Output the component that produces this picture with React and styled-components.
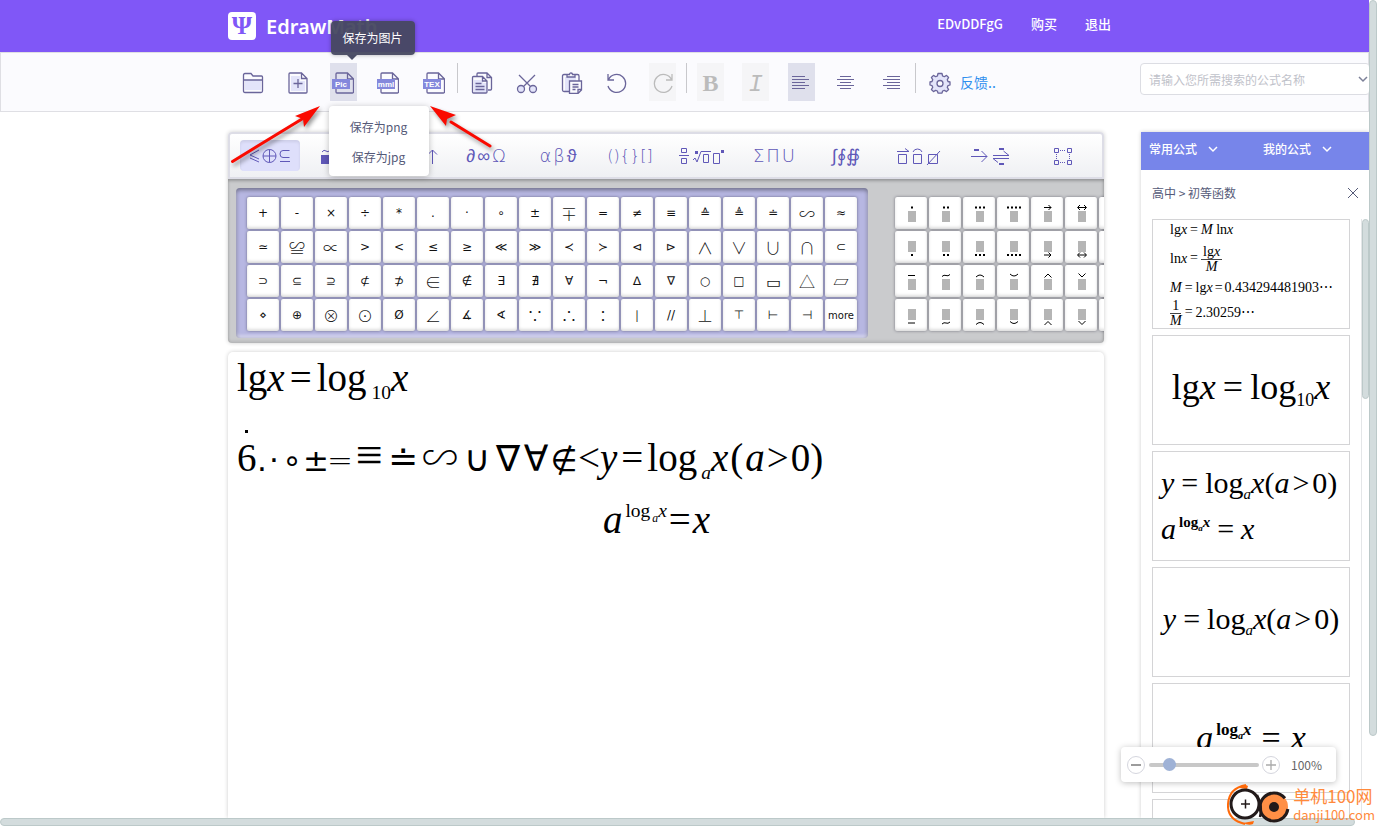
import React from 'react'
import styled, { createGlobalStyle, css } from 'styled-components'

const GlobalStyle = createGlobalStyle`
    *{
        box-sizing: border-box;
        margin: 0;
        padding: 0;
    }
    body{
        font-family: "Noto Sans CJK SC", "Noto Sans", sans-serif;
        font-size: 12px;
        color: #555a78;
        background-color: #fff;
        overflow: hidden;
    }
    button{
        border: none;
        background: none;
        font: inherit;
        color: inherit;
        cursor: pointer;
    }
    a{
        text-decoration: none;
        color: inherit;
    }
`

/* page frame */
const Frame = styled.div`
    position: relative;
    display: grid;
    grid-template-columns: minmax(0, 1fr) 8px;
    grid-template-rows: minmax(0, 1fr) 8px;
    height: 100vh;
`
const Page = styled.div`
    display: flex;
    flex-direction: column;
    min-height: 0;
`
const Track = styled.div`
    display: flex;
    flex-direction: ${p => (p.$vertical ? 'column' : 'row')};
    background-color: #fff;
    border: 0 solid #e4e6e8;
    border-left-width: ${p => (p.$line ? '1px' : 0)};
`
const Thumb = styled.div`
    flex: 0 0 ${p => p.$size};
    border: 1px solid #bcc9c9;
    border-radius: 4px;
    background-color: #d3dcdd;
`

/* header */
const Header = styled.header`
    flex: none;
    display: flex;
    align-items: center;
    justify-content: space-between;
    height: 52px;
    padding: 0 258px 0 228px;
    background-color: #8057f7;
    color: #fff;
`
const Brand = styled.a`
    display: flex;
    align-items: center;
    gap: 10px;
    font-family: "Noto Sans", sans-serif;
    font-size: 20px;
    font-weight: 600;
`
const BrandMark = styled.span`
    width: 28px;
    height: 28px;
    border-radius: 4px;
    background-color: #fff;
    color: #8057f7;
    font-family: "Liberation Serif", serif;
    font-size: 26px;
    font-weight: bold;
    line-height: 28px;
    text-align: center;
`
const UserNav = styled.nav`
    display: flex;
    gap: 28px;
    font-weight: 500;
    font-size: 13px;
    line-height: 20px;
    margin-bottom: 4px;
`

/* toolbar */
const Toolbar = styled.div`
    flex: none;
    display: flex;
    align-items: center;
    height: 60px;
    padding-left: 238px;
    border: 1px solid #dfdfe4;
    background-color: #fbfbfe;
`
const ToolGroup = styled.div`
    display: flex;
    justify-content: space-between;
    width: 208px;
`
const Divider = styled.span`
    width: 1px;
    height: 30px;
    margin: 0 10px 8px;
    background-color: #c8c8cc;
`
const ToolButton = styled.button`
    display: flex;
    align-items: center;
    justify-content: center;
    width: 27px;
    height: 38px;
    padding-top: 2px;
    color: #6a659a;
    ${p => p.$active && css`background-color: #dfe0ec;`}
    &:disabled{
        background-color: #f5f5f7;
        color: #bbb;
    }
`
const Letter = styled.span`
    font-family: ${p => (p.$italic ? '"Liberation Mono", monospace' : '"Liberation Serif", serif')};
    font-style: ${p => (p.$italic ? 'italic' : 'normal')};
    font-weight: ${p => (p.$italic ? 'normal' : 'bold')};
    font-size: 24px;
    line-height: 24px;
    padding-top: ${p => (p.$italic ? '4px' : 0)};
`
const ToolWrap = styled.div`
    position: relative;
`
const Tooltip = styled.div`
    position: absolute;
    z-index: 3;
    left: 1px;
    bottom: 46px;
    padding: 7px 12px;
    border-radius: 4px;
    background-color: rgba(70, 72, 96, 0.95);
    color: #fff;
    line-height: 20px;
    white-space: nowrap;
    box-shadow: 0 0 4px rgba(0, 0, 0, 0.3);
    &::after{
        content: "";
        position: absolute;
        left: 16px;
        top: 100%;
        border: 5px solid transparent;
        border-top-color: #4b4d66;
        border-bottom: none;
    }
`
const Menu = styled.div`
    position: absolute;
    z-index: 3;
    top: 43px;
    left: -1px;
    width: 100px;
    padding: 5px 0;
    border-radius: 4px;
    background-color: #fff;
    box-shadow: 0 1px 6px rgba(0, 0, 0, 0.25);
`
const MenuItem = styled.button`
    display: block;
    width: 100%;
    height: 30px;
    text-align: center;
`
const Feedback = styled.a`
    margin-left: 7px;
    color: #2f8fee;
    font-size: 14px;
`
const Search = styled.label`
    display: flex;
    align-items: center;
    width: 230px;
    height: 32px;
    margin: 0 -2px 6px auto;
    padding-left: 8px;
    border: 1px solid #dcdde3;
    border-radius: 4px;
    background-color: #fff;
    color: #7c8098;
    overflow: hidden;
    input{
        flex: 1;
        min-width: 0;
        border: none;
        outline: none;
        font: inherit;
        color: #555a78;
        background: none;
    }
    input::placeholder{
        color: #bfc2ca;
    }
`

/* body */
const Body = styled.main`
    flex: 1;
    min-height: 0;
    display: grid;
    grid-template-columns: minmax(0, 1fr) 228px;
    column-gap: 37px;
    padding: 20px 0 0 228px;
    overflow: hidden;
`
const Editor = styled.section`
    display: flex;
    flex-direction: column;
    gap: 9px;
    min-width: 0;
    min-height: 0;
`
const PaletteBox = styled.div`
    flex: none;
    border-radius: 4px;
    box-shadow: 0 0 4px rgba(0, 0, 0, 0.2);
`
const Tabs = styled.div`
    display: grid;
    grid-template-columns: repeat(12, 1fr);
    align-items: center;
    height: 47px;
    padding: 0 4px;
    border: 2px solid #dddde6;
    border-radius: 4px 4px 0 0;
    background: linear-gradient(#fff, #eff0f3);
`
const Tab = styled.button`
    justify-self: center;
    display: flex;
    align-items: center;
    justify-content: center;
    gap: 2px;
    width: 60px;
    height: 31px;
    border-radius: 4px;
    color: #6058b8;
    font-family: "DejaVu Sans", sans-serif;
    font-weight: 200;
    font-size: 18px;
    white-space: nowrap;
    ${p => p.$active && css`
        background-color: #dedffb;
        box-shadow: inset 0 2px 3px rgba(0, 0, 0, 0.08);
    `}
`
const Brackets = styled.span`
    font-size: 16px;
`
const Shelf = styled.div`
    display: flex;
    gap: 16px;
    height: 164px;
    padding: 9px 0 5px 8px;
    border-radius: 0 0 4px 4px;
    background-color: #cacbcd;
    box-shadow: inset 0 2px 3px rgba(0, 0, 0, 0.25), inset -1px -2px 3px rgba(0, 0, 0, 0.1);
    overflow: hidden;
`
const KeyPanel = styled.div`
    flex: none;
    display: grid;
    grid-template-columns: repeat(${p => p.$cols}, 32px);
    grid-auto-rows: 32px;
    gap: 2px;
    padding: 9px 11px 7px;
    border-radius: 4px;
    ${p => p.$active && css`
        background-color: #b7b7e2;
        box-shadow: inset 0 2px 4px rgba(0, 0, 0, 0.4), inset 0 -3px 3px rgba(255, 255, 255, 0.4);
    `}
`
const Key = styled.button`
    display: flex;
    align-items: center;
    justify-content: center;
    border-radius: 2px;
    background-color: #fff;
    box-shadow: 0 0 3px rgba(40, 40, 60, 0.55), inset 0 -2px 3px rgba(0, 0, 0, 0.13);
    color: #111;
    font-family: "DejaVu Sans", sans-serif;
    font-size: 12px;
    ${p => p.$big && css`
        font-family: "Noto Sans CJK JP", "DejaVu Sans", sans-serif;
        font-weight: 300;
        font-size: 16px;
    `}
    ${p => p.$word && css`font-size: 10px;`}
`

const Sheet = styled.div`
    flex: 1;
    min-height: 0;
    padding: 4px 28px 0 9px;
    border-radius: 5px 5px 0 0;
    background-color: #fff;
    box-shadow: 0 0 4px rgba(0, 0, 0, 0.2);
`
const Line = styled.div`
    display: flex;
    align-items: baseline;
    justify-content: ${p => (p.$center ? 'center' : 'flex-start')};
    height: ${p => (p.$tall ? '78px' : '64px')};
    line-height: ${p => (p.$tall ? '66px' : '44px')};
    padding-top: ${p => (p.$tall ? '2px' : 0)};
    color: #000;
    font-family: "Liberation Serif", serif;
    font-size: 39px;
    white-space: nowrap;
`
const symFonts = {
    sans: '"DejaVu Sans", sans-serif',
    serif: '"Liberation Serif", serif',
    cjk: '"Noto Sans CJK JP", sans-serif',
}
const Sym = styled.span`
    display: flex;
    justify-content: center;
    width: ${p => p.$w}px;
    font-family: ${p => symFonts[p.$font || 'sans']};
    font-size: ${p => p.$size || 31}px;
    font-weight: ${p => (p.$thin ? 200 : 400)};
`
const Dotted = styled.span`
    position: relative;
    width: 19px;
    &::before{
        content: "";
        position: absolute;
        left: 8px;
        top: 5px;
        width: 3px;
        height: 3px;
        background-color: #000;
    }
`

/* formula text */
const Formula = styled.span`
    font-family: "Liberation Serif", serif;
    font-size: ${p => p.$size}px;
    line-height: 1;
    color: #000;
    white-space: nowrap;
`
const Op = styled.span`
    margin: 0 ${p => p.$gap || 0}px;
`
const Sub = styled.sub`
    font-size: 50%;
    line-height: 0;
    vertical-align: -0.4em;
    margin-left: ${p => p.$gap || 0}px;
`
const Sup = styled.sup`
    font-size: 50%;
    line-height: 0;
    vertical-align: 0.8em;
    margin-left: 3px;
    font-weight: ${p => (p.$bold ? 'bold' : 'normal')};
    ${Sub}{
        font-size: 60%;
    }
`
const Frac = styled.span`
    display: inline-flex;
    flex-direction: column;
    align-items: center;
    vertical-align: middle;
    > :first-child{
        border-bottom: 1px solid #444;
        padding: 0 2px;
    }
`

/* side panel */
const Side = styled.aside`
    display: flex;
    flex-direction: column;
    min-height: 0;
    box-shadow: 0 0 4px rgba(0, 0, 0, 0.2);
`
const SideTabs = styled.div`
    flex: none;
    display: grid;
    grid-template-columns: 1fr 1fr;
    height: 38px;
    background-color: #7785ea;
    color: #fff;
    font-weight: 500;
`
const SideTab = styled.button`
    display: flex;
    align-items: center;
    gap: 10px;
    padding: 0 8px 5px;
`
const Crumb = styled.div`
    flex: none;
    display: flex;
    align-items: center;
    justify-content: space-between;
    height: 49px;
    padding: 0 9px 4px 11px;
    button{
        display: flex;
    }
`
const CardArea = styled.div`
    flex: 1;
    min-height: 0;
    display: grid;
    grid-template-columns: minmax(0, 1fr) 8px;
    column-gap: 11px;
    padding-left: 11px;
`
const CardList = styled.div`
    display: flex;
    flex-direction: column;
    gap: 6px;
    overflow: hidden;
`
const Card = styled.div`
    flex: none;
    display: flex;
    flex-direction: column;
    justify-content: center;
    align-items: ${p => (p.$left ? 'flex-start' : 'center')};
    gap: 16px;
    height: 110px;
    padding: 0 8px ${p => (p.$low ? 0 : '6px')};
    border: 1px solid #d4d4d6;
`
const CardRows = styled(Card)`
    display: grid;
    grid-template-rows: 20px 38px 20px 30px;
    gap: 0;
    align-items: center;
    justify-content: start;
    padding: 0 17px;
`

/* overlays */
const ZoomBar = styled.div`
    position: absolute;
    right: 41px;
    bottom: 44px;
    display: flex;
    align-items: center;
    width: 215px;
    height: 35px;
    padding: 0 6px;
    border-radius: 4px;
    background-color: #fff;
    box-shadow: 0 1px 6px rgba(0, 0, 0, 0.25);
    color: #666;
`
const RoundButton = styled.button`
    display: flex;
    align-items: center;
    justify-content: center;
    width: 18px;
    height: 18px;
    border: 1px solid #d5d6de;
    border-radius: 50%;
    color: ${p => (p.$light ? '#aaa' : '#666')};
`
const Range = styled.input`
    appearance: none;
    width: 110px;
    height: 4px;
    margin: 0 3px 0 4px;
    border-radius: 2px;
    background-color: #c8c8c8;
    &::-webkit-slider-thumb{
        appearance: none;
        width: 13px;
        height: 13px;
        border-radius: 50%;
        background-color: #9fb2d6;
    }
`
const ZoomValue = styled.output`
    margin-left: 11px;
    line-height: 18px;
`
const Annotation = styled.svg`
    position: absolute;
    z-index: 4;
    left: 224px;
    top: 98px;
    pointer-events: none;
`
const Stamp = styled.div`
    position: absolute;
    right: 2px;
    bottom: 0;
    display: flex;
    align-items: center;
    gap: 2px;
    color: #ff8a3c;
`
const StampText = styled.div`
    font-size: 17px;
    line-height: 20px;
    small{
        display: block;
        font-size: 13px;
        line-height: 18px;
    }
`

/* icons */
const Icon = ({ size = 22, children, ...rest }) => (
    <svg width={size} height={size} viewBox={`0 0 ${size} ${size}`} fill="none" stroke="currentColor" strokeWidth="1.3" {...rest}>
        {children}
    </svg>
)
const FolderIcon = () => (
    <Icon>
        <path d="M3 8h16v10H3z" fill="#e3e4fa" stroke="none" />
        <path d="M1.5 19V3q0-1.5 1.5-1.5h6l2 2.5h8.500q1 0 1 1V19q0 1.500-1.500 1.500H3q-1.500 0-1.500-1.500zM1.500 8h19" />
    </Icon>
)
const NewIcon = () => (
    <Icon>
        <path d="M4 4h9v5h5v10H4z" fill="#e3e4fa" stroke="none" />
        <path d="M14.500 1H3Q2 1 2 2v18q0 1 1 1h16q1 0 1-1V6.500zM14.500 1v5.500H20M11 7v9M6.500 11.500h9" />
    </Icon>
)
const FileIcon = ({ label }) => (
    <Icon>
        <path d="M15.500 1H5Q4 1 4 2v18q0 1 1 1h15.500q1 0 1-1V7zM15.500 1v6h6" />
        <rect x="0" y="7" width="18" height="10" fill="#8488dc" stroke="none" />
        <text x="9" y="15" textAnchor="middle" fontFamily="Liberation Sans" fontWeight="bold" fontSize="8" fill="#fff" stroke="none">{label}</text>
    </Icon>
)
const CopyIcon = () => (
    <Icon>
        <path d="M3 8h9v3h4v9H3z" fill="#e3e4fa" stroke="none" />
        <path d="M6 4V2q0-1 1-1h9l4.500 4.500V17q0 1-1 1H17M16 1v4.500h4.500" />
        <path d="M11.500 4.500H2.500q-1 0-1 1V20q0 1 1 1H15q1 0 1-1V9zM11.500 4.500V9H16M4.500 11.500h6M4.500 14.500h9M4.500 17.500h9" />
    </Icon>
)
const CutIcon = () => (
    <Icon>
        <circle cx="5" cy="17" r="3.500" fill="#e3e4fa" />
        <circle cx="17" cy="17" r="3.500" fill="#e3e4fa" />
        <path d="M3 3l11.500 11.500M19 3L7.500 14.500" />
    </Icon>
)
const PasteIcon = () => (
    <Icon>
        <path d="M4 5h11v4H9v10H4z" fill="#e3e4fa" stroke="none" />
        <path d="M6 2.500H3q-1.500 0-1.500 1.500v14q0 1.500 1.500 1.500h5M14 2.500h2.500Q18 2.500 18 4v5M6 5V2.500h2.500q0-1.500 1.500-1.500t1.500 1.500H14V5z" />
        <path d="M8.500 9h12v9l-3.500 3.500H8.500zM17 21v-3.500h3.500M11.500 12.500h6M11.500 15h6M11.500 17.500h3" />
    </Icon>
)
const UndoIcon = ({ flip }) => (
    <Icon>
        <path d={flip ? 'M19.500 7.500A9 9 0 1 0 20 14M20 2v6h-6' : 'M2.500 7.500A9 9 0 1 1 2 14M2 2v6h6'} />
    </Icon>
)
const AlignIcon = ({ rows }) => (
    <Icon shapeRendering="crispEdges" strokeWidth="1">
        {rows.map(([x, w], i) => <path key={i} d={`M${x} ${4.5 + i * 3}h${w}`} />)}
    </Icon>
)
const GearIcon = () => (
    <Icon>
        <path
            d="M9 1.500h4l.6 2.500 1.700.7 2.200-1.300 2.100 2.100-1.300 2.200.7 1.800 2 .500v3l-2 .600-.7 1.700 1.300 2.200-2.100 2.100-2.200-1.300-1.700.7-.6 2.200H9l-.6-2.200-1.700-.7-2.200 1.300-2.100-2.100 1.300-2.200L3 13.600l-2-.600v-3l2-.500.7-1.800-1.300-2.200 2.100-2.100 2.200 1.300L8.400 4z"
            fill="#e3e4fa"
            strokeLinejoin="round"
        />
        <circle cx="11" cy="11.500" r="3" fill="#fbfbfe" />
    </Icon>
)
const Chevron = () => (
    <Icon size={12} strokeWidth="1.500"><path d="M2 4l4 4 4-4" /></Icon>
)

const TabIcon = ({ children }) => (
    <svg width="54" height="20" viewBox="0 0 54 20" fill="none" stroke="currentColor">{children}</svg>
)
const letters = text => [...text].map(e => <span key={e}>{e}</span>)
const tabs = [
    <TabIcon>
        <path d="M16 4L7 9l9 4M7 12l9 4M46.500 4.500H40q-3 0-3 3.500t3 3.500h6.500M37 15.500h10" />
        <circle cx="26.500" cy="10" r="6.500" />
        <path d="M20 10h13M26.500 3.500v13" />
    </TabIcon>,
    <TabIcon>
        <path d="M6 9h9v9H6zM22 9h9v9h-9zM38 9h9v9h-9z" fill="currentColor" stroke="none" />
        <path d="M7 6q2-3 4-1t4-1M22 5h9M38 6l4-3 4 3" />
    </TabIcon>,
    <TabIcon>
        <path d="M4 10h14M4 10l4-4M4 10l4 4M24 10h10M45.500 4v14M41 8.500l4.500-4.500 4.500 4.500" />
    </TabIcon>,
    letters('∂∞Ω'),
    letters('αβϑ'),
    <Brackets>{'(){}[]'}</Brackets>,
    <TabIcon>
        <path d="M6.500 2.500h5v4h-5zM4 9.500h10M6.500 12.500h5v5h-5zM18 14l2-2 2 4 4-10.500h10M28.500 8.500h5v8h-5zM38.500 7.500h6v10h-6z" />
        <path d="M20 5h3v3h-3zM46 4h3v3h-3z" fill="currentColor" stroke="none" />
    </TabIcon>,
    letters('ΣΠU'),
    '∫∮∯',
    <TabIcon>
        <path d="M7.500 8.500h8v9h-8zM6 5.500h12M14 2.500l4 3M22.500 8.500h8v9h-8zM22 6q1-3 4.500-3T31 6M37.500 8.500h9v9h-9zM36 19L49 5" />
    </TabIcon>,
    <TabIcon>
        <path d="M8 10.500h16M18.500 5l5.500 5.500-5.500 5.500M30 9.500h16L40.500 5M46 12.500H30l5 4" />
        <path d="M11 3h5v2h-5zM36 2h5v2h-5zM36 17h5v2h-5z" fill="currentColor" stroke="none" />
    </TabIcon>,
    <TabIcon>
        <path d="M19.500 2.500h4v4h-4zM32.500 2.500h4v4h-4zM19.500 14.500h4v4h-4zM32.500 14.500h4v4h-4z" />
        <path d="M25 4.500h6M25 16.500h6M21.500 8v6M34.500 8v6" strokeDasharray="1 1" />
    </TabIcon>,
]

const keys = [
    '+', '-', '×', '÷', '*', '.', '·', '∘', '±', '∓', '=', '≠', '≡', '≙', '≜', '≐', '∽', '≈',
    '≃', '≌', '∝', '>', '<', '≤', '≥', '≪', '≫', '≺', '≻', '⊲', '⊳', '∧', '∨', '∪', '∩', '⊂',
    '⊃', '⊆', '⊇', '⊄', '⊅', '∈', '∉', '∃', '∄', '∀', '¬', '∆', '∇', '○', '□', '▭', '△', '▱',
    '⋄', '⊕', '⊗', '⊙', 'Ø', '∠', '∡', '∢', '∵', '∴', '∶', '∣', '//', '⊥', '⊤', '⊢', '⊣', 'more',
]
const bigKeys = '∓∽≌∝∧∨∪∩∈⊗⊙∠∵∴∶∣⊥▭△▱'

// mark shapes drawn over or under the placeholder box, centred on x=17
const marks = {
    dot1: 'M16 0h2',
    dot2: 'M14 0h2M18 0h2',
    dot3: 'M12 0h2M16 0h2M20 0h2',
    dot4: 'M10 0h2M14 0h2M18 0h2M22 0h2',
    right: 'M13 0h7M17.500-2.500l2.500 2.500-2.500 2.500',
    both: 'M13 0h8M15-2.500L12.500 0l2.500 2.500M19-2.500L21.500 0l-2.500 2.500',
    bar: 'M13 0h7',
    tilde: 'M13 1q2-2 4-1t4-1',
    cap: 'M13 1.500q4-4 8 0',
    cup: 'M13-1.500q4 4 8 0',
    hat: 'M13.500 2l3.500-3.500 3.500 3.500',
    check: 'M13.500-2L17 1.500 20.500-2',
}
const accentRows = [
    { under: false, names: ['dot1', 'dot2', 'dot3', 'dot4', 'right', 'both', 'bar'] },
    { under: true, names: ['dot1', 'dot2', 'dot3', 'dot4', 'right', 'both', 'bar'] },
    { under: false, names: ['bar', 'tilde', 'cap', 'cup', 'hat', 'check', 'bar'] },
    { under: true, names: ['bar', 'tilde', 'cap', 'cup', 'hat', 'check', 'bar'] },
]
const Accent = ({ name, under }) => (
    <svg width="32" height="32" viewBox="0 0 32 32" fill="none" stroke="#000">
        <rect x="13" y={under ? 10 : 14} width="8" height="11" fill="#b5b5b5" stroke="none" />
        <path d={marks[name]} transform={`translate(0 ${under ? 24 : 10.5})`} strokeWidth={name.startsWith('dot') ? 2 : 1} />
    </svg>
)

const LogFormula = ({ size, gap }) => (
    <Formula $size={size}>
        <i>y</i><Op $gap={gap}>=</Op>log<Sub><i>a</i></Sub><i>x</i>(<i>a</i><Op $gap={3}>&gt;</Op>0)
    </Formula>
)
const PowFormula = ({ size, gap }) => (
    <Formula $size={size}>
        <i>a</i><Sup $bold>log<Sub><i>a</i></Sub><i>x</i></Sup><Op $gap={gap}>=</Op><i>x</i>
    </Formula>
)

function App() {
    return (
        <>
            <GlobalStyle />
            <Frame>
                <Page>
                    <Header>
                        <Brand href="#"><BrandMark>Ψ</BrandMark>EdrawMath</Brand>
                        <UserNav>
                            <a href="#">EDvDDFgG</a>
                            <a href="#">购买</a>
                            <a href="#">退出</a>
                        </UserNav>
                    </Header>
                    <Toolbar>
                        <ToolGroup>
                            <ToolButton aria-label="打开"><FolderIcon /></ToolButton>
                            <ToolButton aria-label="新建"><NewIcon /></ToolButton>
                            <ToolWrap>
                                <ToolButton $active aria-label="保存为图片"><FileIcon label="Pic" /></ToolButton>
                                <Tooltip role="tooltip">保存为图片</Tooltip>
                                <Menu>
                                    <MenuItem>保存为png</MenuItem>
                                    <MenuItem>保存为jpg</MenuItem>
                                </Menu>
                            </ToolWrap>
                            <ToolButton aria-label="mml"><FileIcon label="mml" /></ToolButton>
                            <ToolButton aria-label="TEX"><FileIcon label="TEX" /></ToolButton>
                        </ToolGroup>
                        <Divider />
                        <ToolGroup>
                            <ToolButton aria-label="复制"><CopyIcon /></ToolButton>
                            <ToolButton aria-label="剪切"><CutIcon /></ToolButton>
                            <ToolButton aria-label="粘贴"><PasteIcon /></ToolButton>
                            <ToolButton aria-label="撤销"><UndoIcon /></ToolButton>
                            <ToolButton aria-label="重做" disabled><UndoIcon flip /></ToolButton>
                        </ToolGroup>
                        <Divider />
                        <ToolGroup>
                            <ToolButton disabled><Letter>B</Letter></ToolButton>
                            <ToolButton disabled><Letter $italic>I</Letter></ToolButton>
                            <ToolButton $active aria-label="左对齐"><AlignIcon rows={[[2, 13], [2, 17], [2, 13], [2, 17], [2, 13]]} /></ToolButton>
                            <ToolButton aria-label="居中"><AlignIcon rows={[[5, 11], [2, 17], [5, 11], [2, 17], [5, 11]]} /></ToolButton>
                            <ToolButton aria-label="右对齐"><AlignIcon rows={[[6, 13], [2, 17], [6, 13], [2, 17], [6, 13]]} /></ToolButton>
                        </ToolGroup>
                        <Divider />
                        <ToolButton aria-label="设置"><GearIcon /></ToolButton>
                        <Feedback href="#">反馈..</Feedback>
                        <Search>
                            <input type="text" aria-label="搜索公式" placeholder="请输入您所需搜索的公式名称" />
                            <Chevron />
                        </Search>
                    </Toolbar>
                    <Body>
                        <Editor>
                            <PaletteBox>
                                <Tabs>
                                    {tabs.map((e, i) => <Tab key={i} $active={i === 0}>{e}</Tab>)}
                                </Tabs>
                                <Shelf>
                                    <KeyPanel $cols={18} $active>
                                        {keys.map((e, i) => (
                                            <Key key={i} $big={bigKeys.includes(e)} $word={e === 'more'}>{e}</Key>
                                        ))}
                                    </KeyPanel>
                                    <KeyPanel $cols={7}>
                                        {accentRows.map((row, r) => row.names.map((name, i) => (
                                            <Key key={`${r}-${i}`} aria-label={name}><Accent name={name} under={row.under} /></Key>
                                        )))}
                                    </KeyPanel>
                                </Shelf>
                            </PaletteBox>
                            <Sheet>
                                <Line>
                                    <span>lg<i>x</i><Op $gap={5}>=</Op>log<Sub $gap={5}>10</Sub><i>x</i></span>
                                </Line>
                                <Line $tall>
                                    <Dotted>6</Dotted>
                                    <Sym $w={12}>.</Sym>
                                    <Sym $w={12}>·</Sym>
                                    <Sym $w={24}>∘</Sym>
                                    <Sym $w={24}>±</Sym>
                                    <Sym $w={24} $thin>=</Sym>
                                    <Sym $w={34} $size={48} $font="serif">≡</Sym>
                                    <Sym $w={34} $size={36}>≐</Sym>
                                    <Sym $w={40} $size={36} $font="cjk" $thin>∽</Sym>
                                    <Sym $w={34} $size={36}>∪</Sym>
                                    <Sym $w={28} $size={36}>∇</Sym>
                                    <Sym $w={28} $size={36}>∀</Sym>
                                    <Sym $w={28}>∉</Sym>
                                    <span>&lt;<i>y</i><Op $gap={4}>=</Op>log<Sub $gap={4}><i>a</i></Sub><i>x</i><Op $gap={2}>(</Op><i>a</i><Op $gap={2}>&gt;</Op>0)</span>
                                </Line>
                                <Line $center>
                                    <span><i>a</i><Sup>log<Sub $gap={2}><i>a</i></Sub><i>x</i></Sup><Op $gap={2}>=</Op><i>x</i></span>
                                </Line>
                            </Sheet>
                        </Editor>
                        <Side>
                            <SideTabs>
                                <SideTab>常用公式 <Chevron /></SideTab>
                                <SideTab>我的公式 <Chevron /></SideTab>
                            </SideTabs>
                            <Crumb>
                                <span>高中 &gt; 初等函数</span>
                                <button aria-label="关闭"><Icon size={14} strokeWidth="1"><path d="M2 2l10 10M12 2L2 12" /></Icon></button>
                            </Crumb>
                            <CardArea>
                                <CardList>
                                    <CardRows>
                                        <Formula $size={14}>lg<i>x</i><Op $gap={3}>=</Op><i>M</i> ln<i>x</i></Formula>
                                        <Formula $size={14}>ln<i>x</i><Op $gap={3}>=</Op><Frac><span>lg<i>x</i></span><i>M</i></Frac></Formula>
                                        <Formula $size={14}><i>M</i><Op $gap={3}>=</Op>lg<i>x</i><Op $gap={2}>=</Op>0.434294481903⋯</Formula>
                                        <Formula $size={14}><Frac><span>1</span><i>M</i></Frac><Op $gap={3}>=</Op>2.30259⋯</Formula>
                                    </CardRows>
                                    <Card>
                                        <Formula $size={36}>lg<i>x</i><Op $gap={7}>=</Op>log<Sub>10</Sub><i>x</i></Formula>
                                    </Card>
                                    <Card $left $low>
                                        <LogFormula size={30} gap={7} />
                                        <PowFormula size={30} gap={7} />
                                    </Card>
                                    <Card><LogFormula size={30} gap={7} /></Card>
                                    <Card $low><PowFormula size={34} gap={10} /></Card>
                                    <Card />
                                </CardList>
                                <Track $vertical $line><Thumb $size="180px" /></Track>
                            </CardArea>
                        </Side>
                    </Body>
                </Page>
                <Track $vertical><Thumb $size="90%" /></Track>
                <Track><Thumb $size="99%" /></Track>
                <Annotation width="280" height="80" viewBox="0 0 280 80">
                    <g style={{ filter: 'drop-shadow(2px 3px 2px rgba(0,0,0,.4))' }}>
                        <path d="M8.500 63.500L78 21M266 48L227 24" stroke="#fa0a00" strokeWidth="3" strokeLinecap="round" />
                        <path d="M96 8L71 18l8 3 1 8zM206 8l16 20 1-7 9-4z" fill="#fa0a00" />
                    </g>
                </Annotation>
                <ZoomBar>
                    <RoundButton aria-label="缩小"><Icon size={10}><path d="M0 5h10" /></Icon></RoundButton>
                    <Range type="range" aria-label="缩放" min="0" max="100" defaultValue="14" />
                    <RoundButton $light aria-label="放大"><Icon size={10}><path d="M0 5h10M5 0v10" /></Icon></RoundButton>
                    <ZoomValue>100%</ZoomValue>
                </ZoomBar>
                <Stamp>
                    <svg width="64" height="42" viewBox="0 0 64 42" fill="none">
                        <path d="M19 1Q2 4 1 20t17 20" stroke="#ff6a0a" strokeWidth="2" />
                        <path d="M12 4q5-5 9-2l-1 3zM16 39q6 3 10 1l1-3z" fill="#ff6a0a" />
                        <circle cx="18" cy="20" r="14" fill="#fff" stroke="#221a1a" strokeWidth="3" />
                        <path d="M14 20h9M18.500 15.500v9" stroke="#221a1a" strokeWidth="1.500" />
                        <circle cx="47" cy="23" r="14" fill="#ff8f45" stroke="#221a1a" strokeWidth="3" strokeDasharray="76 12" strokeDashoffset="-2" />
                        <circle cx="47" cy="23" r="5" fill="#221a1a" />
                        <path d="M30 11q6 12 3 22" stroke="#221a1a" strokeWidth="2.500" />
                    </svg>
                    <StampText>单机100网<small>danji100.com</small></StampText>
                </Stamp>
            </Frame>
        </>
    )
}

export default App
